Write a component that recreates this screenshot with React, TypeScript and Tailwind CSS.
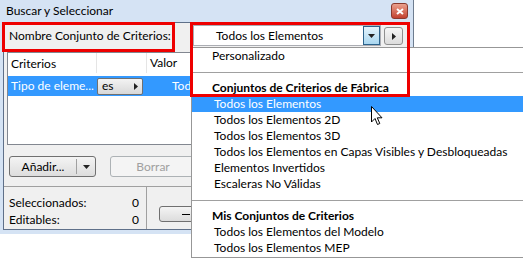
const font = { fontFamily: "Lato, 'Noto Sans', sans-serif" };

function Arrow({ dir = "down", className = "" }: { dir?: "down" | "right"; className?: string }) {
  if (dir === "right") {
    return (
      <svg width="4" height="7" viewBox="0 0 4 7" className={className}>
        <path d="M0 0 L4 3.5 L0 7 Z" fill="#222" />
      </svg>
    );
  }
  return (
    <svg width="7" height="4" viewBox="0 0 7 4" className={className}>
      <path d="M0 0 L7 0 L3.5 4 Z" fill="#222" />
    </svg>
  );
}

const items: { text: string; kind?: "bold" | "sep" | "sel" | "plain" | "first" }[] = [
  { text: "Personalizado", kind: "first" },
  { text: "", kind: "sep" },
  { text: "Conjuntos de Criterios de Fábrica", kind: "bold" },
  { text: "Todos los Elementos", kind: "sel" },
  { text: "Todos los Elementos 2D" },
  { text: "Todos los Elementos 3D" },
  { text: "Todos los Elementos en Capas Visibles y Desbloqueadas" },
  { text: "Elementos Invertidos" },
  { text: "Escaleras No Válidas" },
  { text: "", kind: "sep" },
  { text: "Mis Conjuntos de Criterios", kind: "bold" },
  { text: "Todos los Elementos del Modelo" },
  { text: "Todos los Elementos MEP" },
];

export default function App() {
  return (
    <div className="relative w-[523px] h-[258px] bg-white overflow-hidden text-[12px] text-black" style={font}>
      {/* window */}
      <div className="absolute left-0 top-0 w-[414px] h-[234px] bg-[#d5e3f4] border-r border-[#6d7c8f] flex flex-col pl-[3px] pr-[3px] pb-[4px]">
        <div className="h-[22px] flex items-center justify-between pl-[3px] pr-[2px] shrink-0">
          <span className="leading-none">Buscar y Seleccionar</span>
          <div className="w-[17px] h-[16px] rounded-[3px] border border-[#8a3a2e] bg-gradient-to-b from-[#eaa08e] to-[#c2402f] flex items-center justify-center">
            <svg width="8" height="7" viewBox="0 0 8 7">
              <path d="M1 1 L7 6 M7 1 L1 6" stroke="white" strokeWidth="2" />
            </svg>
          </div>
        </div>

        <div className="flex-1 border border-[#5f7089] bg-[#f0f0f0] flex flex-col">
          {/* row 1 */}
          <div className="h-[29px] flex items-start pt-[2px] shrink-0">
            <span className="pl-[5px] leading-[21px] w-[189px]">Nombre Conjunto de Criterios:</span>
            <div className="w-[188px] h-[21px] bg-white border border-[#abadb3] flex items-center">
              <span className="flex-1 pl-[22px]">Todos los Elementos</span>
              <div className="w-[17px] h-[19px] border border-[#2c628b] bg-gradient-to-b from-[#e5f4fc] to-[#a9d7f0] flex items-center justify-center">
                <Arrow />
              </div>
            </div>
            <div className="ml-[3px] mt-[2px] w-[19px] h-[18px] rounded-[3px] border border-[#8e8f8f] bg-gradient-to-b from-[#f6f6f6] to-[#dcdcdc] flex items-center justify-center">
              <Arrow dir="right" />
            </div>
          </div>

          {/* list */}
          <div className="ml-[3px] mr-[3px] h-[93px] bg-white border border-[#828790] shrink-0 flex flex-col">
            <div className="h-[23px] flex items-end pb-[3px] relative">
              <span className="pl-[3px] w-[88px]">Criterios</span>
              <span className="w-[50px] border-l border-[#e5e5e5] h-[20px]" />
              <span className="border-l border-[#e5e5e5] h-[20px] pl-[3px] leading-[20px]">Valor</span>
            </div>
            <div className="h-[20px] bg-[#3399ff] text-white flex items-center">
              <span className="pl-[3px] w-[89px]">Tipo de eleme...</span>
              <div className="w-[46px] h-[17px] rounded-[2px] border border-[#707070] bg-gradient-to-b from-[#f3f3f3] to-[#d8d8d8] text-black flex items-center justify-between pl-[4px] pr-[4px]">
                <span className="leading-none">es</span>
                <Arrow dir="right" />
              </div>
              <span className="pl-[29px]">Todos los Elementos</span>
            </div>
          </div>

          {/* buttons */}
          <div className="flex items-center pl-[5px] mt-[11px] gap-[14px] shrink-0">
            <div className="w-[87px] h-[21px] rounded-[3px] border border-[#707070] bg-gradient-to-b from-[#f4f4f4] to-[#dddddd] flex items-center">
              <span className="w-[66px] text-center">Añadir...</span>
              <span className="w-px h-[15px] bg-[#a0a0a0]" />
              <span className="flex-1 flex justify-center">
                <Arrow />
              </span>
            </div>
            <div className="w-[86px] h-[21px] rounded-[3px] border border-[#adb2b5] bg-[#f4f4f4] flex items-center justify-center text-[#a0a0a0]">
              Borrar
            </div>
          </div>

          <div className="mt-[9px] border-t border-[#a0a0a0] flex-1 flex">
            <div className="w-[143px] border-r border-[#a0a0a0] pl-[5px] pr-[7px] pt-[7px] flex flex-col">
              <div className="flex justify-between leading-[17px]">
                <span>Seleccionados:</span>
                <span>0</span>
              </div>
              <div className="flex justify-between leading-[17px]">
                <span>Editables:</span>
                <span>0</span>
              </div>
            </div>
            <div className="pl-[12px] pt-[19px]">
              <div className="w-[80px] h-[16px] rounded-[3px] border border-[#707070] bg-gradient-to-b from-[#f4f4f4] to-[#dcdcdc] flex items-center pl-[22px]">
                <span className="w-[8px] h-px bg-black" />
              </div>
            </div>
          </div>
        </div>
      </div>

      {/* dropdown list */}
      <div className="absolute left-[191px] top-[47px] w-[340px] h-[211px] bg-white border border-[#979797] flex flex-col">
        {items.map((it, i) =>
          it.kind === "sep" ? (
            <div key={i} className="h-[16px] flex items-center">
              <div className="w-full h-px bg-[#a0a0a0]" />
            </div>
          ) : (
            <div
              key={i}
              className={
                "h-[16px] leading-[16px] whitespace-nowrap " +
                (it.kind === "bold"
                  ? "font-bold pl-[20px]"
                  : it.kind === "first"
                  ? "pl-[20px]"
                  : it.kind === "sel"
                  ? "bg-[#3399ff] text-white pl-[22px]"
                  : "pl-[22px]")
              }
            >
              {it.text}
            </div>
          )
        )}
      </div>

      {/* red highlight boxes */}
      <div className="absolute left-[2px] top-[22px] w-[173px] h-[30px] border-[3px] border-[#ee0000]" />
      <div className="absolute left-[190px] top-[22px] w-[220px] h-[75px] border-[3px] border-[#ee0000]" />

      {/* cursor */}
      <svg className="absolute left-[371px] top-[106px]" width="12" height="20" viewBox="0 0 12 20">
        <path d="M0.5 0.5 L0.5 16 L4 12.5 L6.5 18.5 L8.8 17.5 L6.3 11.8 L11 11.8 Z" fill="white" stroke="black" strokeWidth="1" />
      </svg>
    </div>
  );
}
